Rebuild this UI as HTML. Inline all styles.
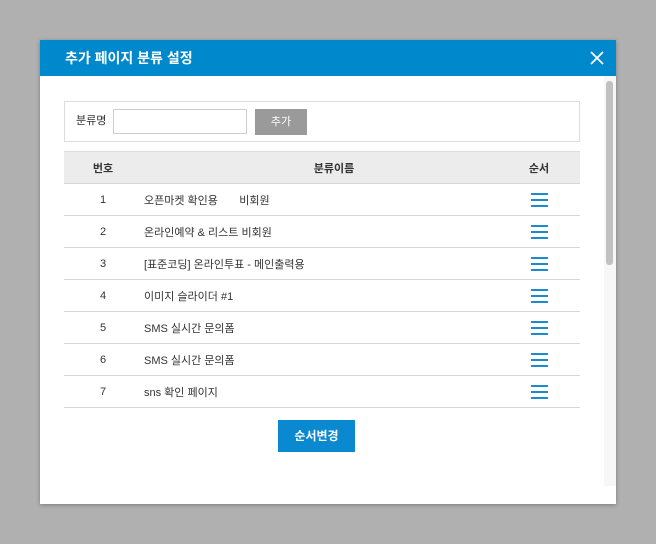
<!DOCTYPE html>
<html><head><meta charset="utf-8"><style>
*{margin:0;padding:0;box-sizing:border-box}
body{width:656px;height:544px;background:#b0b0b0;font-family:"Liberation Sans","Noto Sans CJK KR",sans-serif;position:relative;overflow:hidden}
.dlg{position:absolute;left:40px;top:40px;width:576px;height:464px;background:#fff;box-shadow:0 1px 4px rgba(0,0,0,.3)}
.hd{height:36px;background:#0088cc;color:#fff;font-size:14px;font-weight:bold;line-height:36px;padding-left:25px;position:relative}
.x{position:absolute;right:12px;top:11px;width:14px;height:14px}
.sb{position:absolute;left:564px;top:36px;width:12px;height:410px;background:#f7f7f7}
.th{position:absolute;left:2px;top:5px;width:7px;height:184px;background:#c1c1c1;border-radius:3px}
.form{position:absolute;left:24px;top:61px;width:516px;height:41px;border:1px solid #ddd}
.lbl{position:absolute;left:11px;top:12px;font-size:11px;color:#333;line-height:14px}
.inp{position:absolute;left:48px;top:7px;width:134px;height:25px;border:1px solid #ccc}
.btn{position:absolute;left:190px;top:7px;width:52px;height:26px;background:#9a9a9a;color:#fff;font-size:11px;text-align:center;line-height:26px}
table{position:absolute;left:24px;top:111px;width:516px;border-collapse:collapse;font-size:11px;color:#333}
th{height:32px;background:#ececec;border-top:1px solid #ddd;border-bottom:1px solid #d6d6d6;font-weight:bold;font-size:11px}
th.m{padding-left:28px}
td{height:32px;border-bottom:1px solid #d6d6d6;padding-top:0}
.n{padding-left:2px}
.c1{width:78px;text-align:center}.c3{width:82px;text-align:center}
.hb{display:inline-block;width:17px;height:14px;vertical-align:middle;background:linear-gradient(#1a8ad4 0 2px,transparent 2px 6px,#1a8ad4 6px 8px,transparent 8px 12px,#1a8ad4 12px 14px)}
.ob{position:absolute;left:238px;top:380px;width:77px;height:32px;background:#0a88d0;color:#fff;font-size:12px;font-weight:bold;text-align:center;line-height:32px}
</style></head><body>
<div class="dlg">
<div class="hd">추가 페이지 분류 설정
<svg class="x" viewBox="0 0 14 14"><path d="M1 1L13 13M13 1L1 13" stroke="#fff" stroke-width="1.8"/></svg></div>
<div class="sb"><div class="th"></div></div>
<div class="form"><span class="lbl">분류명</span><div class="inp"></div><div class="btn">추가</div></div>
<table>
<tr><th class="c1">번호</th><th class="m">분류이름</th><th class="c3">순서</th></tr>
<tr><td class="c1">1</td><td class="n">오픈마켓 확인용&nbsp;&nbsp;&nbsp;&nbsp;&nbsp;&nbsp;&nbsp;비회원</td><td class="c3"><span class="hb"></span></td></tr>
<tr><td class="c1">2</td><td class="n">온라인예약 &amp; 리스트 비회원</td><td class="c3"><span class="hb"></span></td></tr>
<tr><td class="c1">3</td><td class="n">[표준코딩] 온라인투표 - 메인출력용</td><td class="c3"><span class="hb"></span></td></tr>
<tr><td class="c1">4</td><td class="n">이미지 슬라이더 #1</td><td class="c3"><span class="hb"></span></td></tr>
<tr><td class="c1">5</td><td class="n">SMS 실시간 문의폼</td><td class="c3"><span class="hb"></span></td></tr>
<tr><td class="c1">6</td><td class="n">SMS 실시간 문의폼</td><td class="c3"><span class="hb"></span></td></tr>
<tr><td class="c1">7</td><td class="n">sns 확인 페이지</td><td class="c3"><span class="hb"></span></td></tr>
</table>
<div class="ob">순서변경</div>
</div>
</body></html>
